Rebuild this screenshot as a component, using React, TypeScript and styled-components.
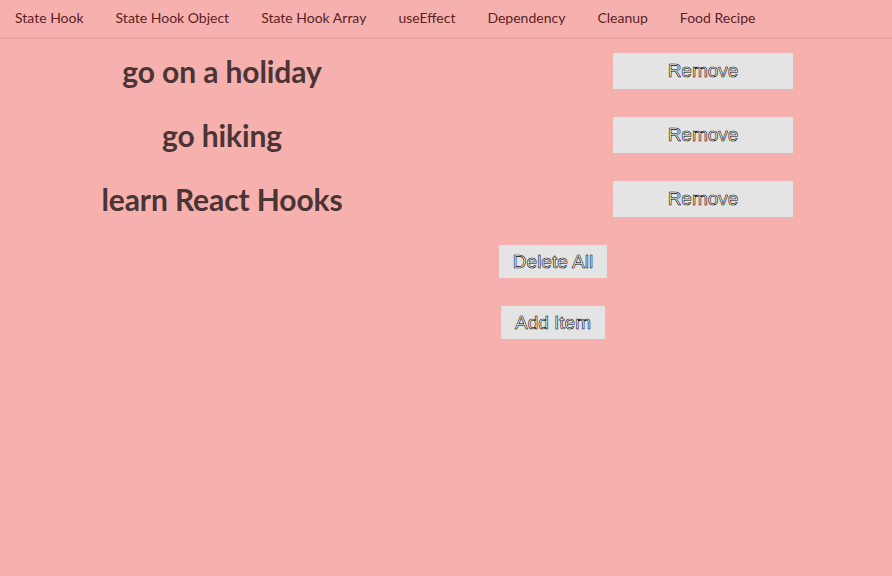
import React from "react";
import styled, { createGlobalStyle } from "styled-components";

const Global = createGlobalStyle`
  html, body { margin: 0; padding: 0; background: #f6b1ae; }
  body { font-family: Lato, "Open Sans", sans-serif; }
`;

const Page = styled.div`
  width: 892px;
  height: 576px;
  background: #f6b1ae;
  overflow: hidden;
`;

const Nav = styled.nav`
  display: flex;
  align-items: center;
  height: 34px;
  padding-left: 15px;
  padding-bottom: 3px;
  border-bottom: 2px solid #eba3a1;
`;

const NavLink = styled.a`
  font-family: Lato, sans-serif;
  font-size: 14px;
  color: #5b2226;
  margin-right: 32px;
  text-decoration: none;
`;

const List = styled.div`
  display: flex;
  flex-direction: column;
  gap: 28px;
  padding-top: 14px;
`;

const Row = styled.div`
  display: grid;
  grid-template-columns: 444px 1fr;
  align-items: center;
  height: 36px;
`;

const Title = styled.h1`
  margin: 0;
  text-align: center;
  font-family: Lato, sans-serif;
  font-weight: 700;
  font-size: 30px;
  letter-spacing: -0.1px;
  color: #4a3435;
`;

const Button = styled.button<{ $w: number; $h: number }>`
  width: ${(p) => p.$w}px;
  height: ${(p) => p.$h}px;
  border: none;
  background: #e5e4e4;
  font-family: "Liberation Sans", Arial, sans-serif;
  font-size: 19px;
  color: #fafafa;
  -webkit-text-stroke: 0.6px #000000;
  -webkit-font-smoothing: antialiased;
  padding: 0;
  cursor: pointer;
`;

const RemoveButton = styled(Button)`
  justify-self: end;
  margin-right: 99px;
`;

const Actions = styled.div`
  display: flex;
  flex-direction: column;
  align-items: center;
  gap: 28px;
  margin-top: 28px;
  padding-left: 214px;
`;

const items = ["go on a holiday", "go hiking", "learn React Hooks"];
const links = [
  "State Hook",
  "State Hook Object",
  "State Hook Array",
  "useEffect",
  "Dependency",
  "Cleanup",
  "Food Recipe",
];

export default function App() {
  return (
    <Page>
      <Global />
      <Nav>
        {links.map((l) => (
          <NavLink key={l}>{l}</NavLink>
        ))}
      </Nav>
      <List>
        {items.map((t) => (
          <Row key={t}>
            <Title>{t}</Title>
            <RemoveButton $w={180} $h={36}>Remove</RemoveButton>
          </Row>
        ))}
      </List>
      <Actions>
        <Button $w={108} $h={33}>Delete All</Button>
        <Button $w={104} $h={33}>Add Item</Button>
      </Actions>
    </Page>
  );
}
